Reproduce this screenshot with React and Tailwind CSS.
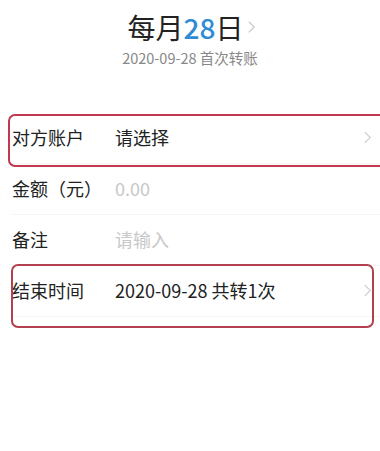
const font = { fontFamily: '"Noto Sans CJK SC", "Noto Sans", sans-serif' }

function Chevron({ className = '' }) {
  return (
    <svg viewBox="0 0 10 16" className={className} fill="none" stroke="currentColor" strokeWidth="1.4">
      <path d="M2 2l6 6-6 6" />
    </svg>
  )
}

function Row({ label, value, placeholder, arrow }) {
  return (
    <div className="flex items-center h-[51px] border-b border-[#f5f5f5]">
      <div className="w-[103px] text-[18px] text-[#222]">{label}</div>
      <div className={`flex-1 text-[18px] ${placeholder ? 'text-[#c8c8c8]' : 'text-[#222]'}`}>{value}</div>
      {arrow && <Chevron className="w-[9px] h-[15px] text-[#cfcfcf] mr-[8px]" />}
    </div>
  )
}

export default function App() {
  return (
    <div className="w-[380px] h-[451px] bg-white relative overflow-hidden" style={font}>
      <div className="flex flex-col items-center pt-[8px]">
        <div className="flex items-center text-[28px] leading-[38px] text-[#222] pl-[4px]">
          <span>每月</span>
          <span className="text-[#2d8cd6] font-medium">28</span>
          <span>日</span>
          <Chevron className="w-[9px] h-[16px] text-[#c8c8c8] ml-[4px]" />
        </div>
        <div className="text-[14.5px] text-[#888] mt-[1px]">2020-09-28 首次转账</div>
      </div>

      <div className="pl-[12px] mt-[44px]">
        <Row label="对方账户" value="请选择" arrow />
        <Row label="金额（元）" value="0.00" placeholder />
        <Row label="备注" value="请输入" placeholder />
        <Row label="结束时间" value="2020-09-28 共转1次" arrow />
      </div>

      <div className="absolute left-[8px] top-[114px] w-[380px] h-[53px] border-2 border-[#c0394f] rounded-[7px]" />
      <div className="absolute left-[11px] top-[264px] w-[363px] h-[64px] border-2 border-[#b2404f] rounded-[7px]" />
    </div>
  )
}
